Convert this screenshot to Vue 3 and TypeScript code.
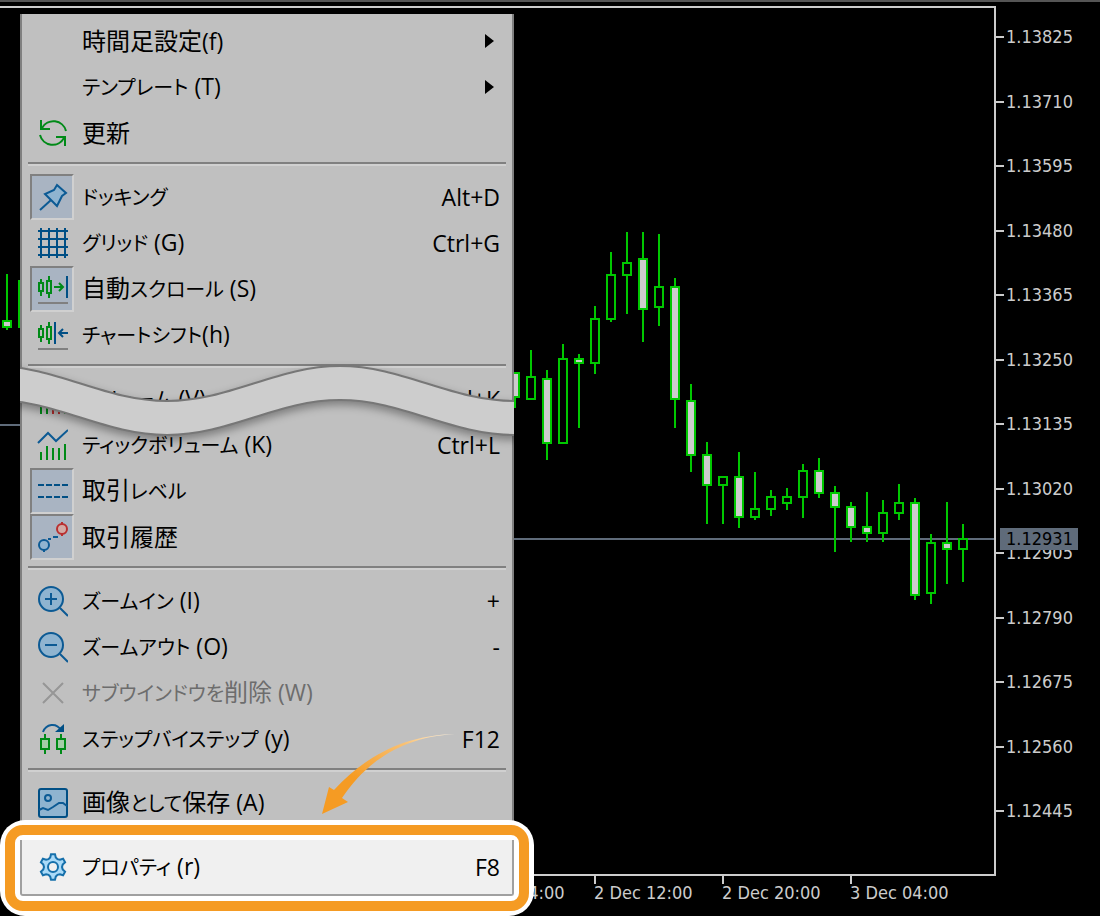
<script setup lang="ts">
interface Candle {
  x: number
  high: number
  top: number
  bottom: number
  low: number
  down: boolean
}

interface MenuEntry {
  id: string
  label: string
  shortcut?: string
  icon?: string
  checked?: boolean
  disabled?: boolean
  submenu?: boolean
}

interface Run {
  text: string
  kind: 'kana' | 'kanji' | 'latin'
}

const rows: [number, number, number, number, number, boolean][] = [
  [7, 274, 320, 328, 330, true],
  [23, 280, 280, 328, 328, false],
  [515, 372, 372, 398, 408, true],
  [531, 350, 376, 400, 400, false],
  [547, 370, 378, 444, 460, true],
  [563, 344, 358, 444, 444, false],
  [579, 354, 358, 364, 428, true],
  [595, 306, 318, 364, 374, false],
  [611, 252, 274, 320, 322, false],
  [627, 232, 262, 276, 314, false],
  [643, 232, 258, 310, 342, true],
  [659, 234, 286, 308, 326, false],
  [675, 278, 286, 400, 428, true],
  [691, 384, 400, 456, 472, true],
  [707, 442, 454, 486, 524, true],
  [723, 476, 476, 486, 524, false],
  [739, 452, 476, 518, 528, true],
  [755, 472, 508, 518, 520, false],
  [771, 490, 496, 510, 516, false],
  [787, 488, 496, 504, 510, false],
  [803, 464, 470, 498, 518, false],
  [819, 458, 470, 494, 498, true],
  [835, 486, 492, 508, 552, true],
  [851, 502, 506, 528, 542, true],
  [867, 492, 526, 534, 542, true],
  [883, 500, 512, 534, 542, false],
  [899, 484, 502, 514, 520, false],
  [915, 498, 502, 596, 600, true],
  [931, 534, 542, 594, 604, false],
  [947, 502, 542, 550, 584, true],
  [963, 524, 538, 550, 582, false],
]

const candles: Candle[] = rows.map(([x, high, top, bottom, low, down]) => ({ x, high, top, bottom, low, down }))

const prices = [
  '1.13825', '1.13710', '1.13595', '1.13480', '1.13365', '1.13250', '1.13135',
  '1.13020', '1.12905', '1.12790', '1.12675', '1.12560', '1.12445',
]

const times = ['2 Dec 04:00', '2 Dec 12:00', '2 Dec 20:00', '3 Dec 04:00']

const groups: MenuEntry[][] = [
  [
    { id: 'timeframe', label: '時間足設定(f)', submenu: true },
    { id: 'template', label: 'テンプレート (T)', submenu: true },
    { id: 'refresh', label: '更新', icon: 'refresh' },
  ],
  [
    { id: 'docking', label: 'ドッキング', shortcut: 'Alt+D', icon: 'pin', checked: true },
    { id: 'grid', label: 'グリッド (G)', shortcut: 'Ctrl+G', icon: 'grid' },
    { id: 'autoscroll', label: '自動スクロール (S)', icon: 'scroll', checked: true },
    { id: 'shift', label: 'チャートシフト(h)', icon: 'shift' },
  ],
  [
    { id: 'volume', label: 'ボリューム (V)', shortcut: 'Ctrl+K', icon: 'volume' },
    { id: 'tick', label: 'ティックボリューム (K)', shortcut: 'Ctrl+L', icon: 'tick' },
    { id: 'levels', label: '取引レベル', icon: 'levels', checked: true },
    { id: 'history', label: '取引履歴', icon: 'history', checked: true },
  ],
  [
    { id: 'zoomin', label: 'ズームイン (I)', shortcut: '+', icon: 'zoomin' },
    { id: 'zoomout', label: 'ズームアウト (O)', shortcut: '-', icon: 'zoomout' },
    { id: 'delete', label: 'サブウインドウを削除 (W)', icon: 'delete', disabled: true },
    { id: 'step', label: 'ステップバイステップ (y)', shortcut: 'F12', icon: 'step' },
  ],
  [{ id: 'save', label: '画像として保存 (A)', icon: 'save' }],
]

const splitRuns = (label: string): Run[] =>
  (label.match(/[\u3040-\u30ff]+|[\u4e00-\u9fff]+|[\x20-\x7e]+/g) ?? []).map((text) => ({
    text,
    kind: /^[\u3040-\u30ff]/.test(text) ? 'kana' : /^[\u4e00-\u9fff]/.test(text) ? 'kanji' : 'latin',
  }))

const polar = (r: number, deg: number): string => {
  const a = (deg * Math.PI) / 180
  return `${(15 + r * Math.sin(a)).toFixed(1)},${(15 - r * Math.cos(a)).toFixed(1)}`
}

const gear = [0, 60, 120, 180, 240, 300]
  .flatMap((a) => [polar(10, a - 16), polar(13, a - 9), polar(13, a + 9), polar(10, a + 16), polar(9, a + 30)])
  .join(' ')
</script>

<template>
  <main class="screen">
    <section class="chart" aria-label="Chart">
      <div class="plot">
        <svg class="canvas" aria-hidden="true">
          <g transform="translate(0 -8)">
            <rect class="level" x="0" y="424" width="20" height="2" />
            <rect class="level" x="514" y="538" width="100%" height="2" />
            <g v-for="c in candles" :key="c.x">
              <rect class="wick" :x="c.x - 1" :y="c.high" width="2" :height="c.low - c.high" />
              <rect
                class="body"
                :class="{ down: c.down }"
                :x="c.x - 4"
                :y="c.top + 1"
                width="8"
                :height="c.bottom - c.top - 2"
              />
            </g>
          </g>
        </svg>
      </div>
      <div class="price-axis">
        <span v-for="p in prices" :key="p" class="price">{{ p }}</span>
        <span class="current">1.12931</span>
      </div>
      <div class="time-axis">
        <span v-for="t in times" :key="t" class="time">{{ t }}</span>
      </div>
    </section>

    <nav class="menu" aria-label="Chart menu">
      <div class="panel">
        <div v-for="(group, gi) in groups" :key="gi" class="group">
          <button
            v-for="item in group"
            :key="item.id"
            type="button"
            class="item"
            :disabled="item.disabled"
          >
            <span class="slot" :class="{ checked: item.checked }">
              <svg v-if="item.icon" class="icon" viewBox="-2 -1 32 32" aria-hidden="true">
                <g v-if="item.icon === 'refresh'" class="green">
                  <path d="M3 2V11H12M4 10A13 13 0 0 1 28 13" />
                  <path d="M27 28V19H18M26 20A13 13 0 0 1 2 17" />
                </g>
                <g v-else-if="item.icon === 'pin'" class="blue">
                  <path class="tint" d="M19 3L28 11L24 14L19 24L13 18L7 12L16 8Z" />
                  <path d="M13 18L2 28" />
                </g>
                <path
                  v-else-if="item.icon === 'grid'"
                  class="navy"
                  d="M3 0V30M11 0V30M19 0V30M27 0V30M0 3H30M0 11H30M0 19H30M0 27H30"
                />
                <g v-else-if="item.icon === 'scroll' || item.icon === 'shift'">
                  <path class="green" d="M1 9H5V17H1ZM3 5V9M3 17V22M9 7H13V19H9ZM11 2V7M11 19V24" />
                  <template v-if="item.icon === 'scroll'">
                    <path class="green" d="M16 13H25M21 9L25 13L21 17" />
                    <path class="navy" d="M29 2V24" />
                  </template>
                  <path v-else class="navy" d="M17 2V24M30 13H21M25 9L21 13L25 17" />
                  <path class="gray" d="M0 29H30" />
                </g>
                <g v-else-if="item.icon === 'volume'">
                  <path class="green" d="M3 22V30M9 16V30" />
                  <path class="red" d="M15 18V30M21 18V30" />
                  <path class="green" d="M27 14V30" />
                </g>
                <g v-else-if="item.icon === 'tick'">
                  <path class="blue" d="M0 13L10 3L18 11L30 0" />
                  <path class="green" d="M3 22V30M9 16V30M15 18V30M21 18V30M27 14V30" />
                </g>
                <path v-else-if="item.icon === 'levels'" class="navy dashed" d="M0 9H30M0 21H30" />
                <g v-else-if="item.icon === 'history'">
                  <path class="blue" d="M10 17H13M15 15H20M6 26V30" />
                  <circle class="blue tint" cx="6" cy="23" r="5" />
                  <path class="red" d="M24 0V4M24 10V14" />
                  <circle class="red warm" cx="24" cy="7" r="5" />
                </g>
                <g v-else-if="item.icon === 'zoomin' || item.icon === 'zoomout'" class="blue">
                  <circle class="tint" cx="13" cy="13" r="12" />
                  <path d="M22 22L30 30M7 13H19" />
                  <path v-if="item.icon === 'zoomin'" d="M13 7V19" />
                </g>
                <path v-else-if="item.icon === 'delete'" class="faded" d="M5 5L25 25M25 5L5 25" />
                <g v-else-if="item.icon === 'step'">
                  <path class="blue" d="M5 8C8 0 18 -2 23 6" />
                  <path class="solid" d="M26 0V8H17Z" />
                  <path class="green mint" d="M3 15H11V25H3ZM19 15H27V25H19Z" />
                  <path class="green" d="M7 10V15M7 25V30M23 10V15M23 25V30" />
                </g>
                <g v-else-if="item.icon === 'save'" class="navy">
                  <rect class="tint" x="1" y="1" width="28" height="28" rx="2" />
                  <circle class="thin" cx="10" cy="10" r="3" />
                  <path class="thin" d="M1 22L5 20L10 22L15 19L21 15L25 15L29 18" />
                </g>
              </svg>
            </span>
            <span class="label"><span v-for="(run, ri) in splitRuns(item.label)" :key="ri" :class="run.kind">{{ run.text }}</span></span>
            <span v-if="item.shortcut" class="keys">{{ item.shortcut }}</span>
            <svg v-if="item.submenu" class="caret" viewBox="0 0 10 14" aria-hidden="true">
              <path d="M1 0L10 7L1 14Z" />
            </svg>
          </button>
        </div>
      </div>

      <div class="callout">
        <div class="highlight">
          <button type="button" class="item">
            <span class="slot">
              <svg class="icon" viewBox="-2 -1 32 32" aria-hidden="true">
                <polygon class="bright" :points="gear" />
                <circle class="bright hole" cx="15" cy="15" r="5" />
              </svg>
            </span>
            <span class="label"><span v-for="(run, ri) in splitRuns('プロパティ (r)')" :key="ri" :class="run.kind">{{ run.text }}</span></span>
            <span class="keys">F8</span>
          </button>
        </div>
      </div>

      <svg class="wave" aria-hidden="true">
        <path
          class="band"
          d="M-26 6C37 6 84 41 147 41S257 6 320 6S431 41 494 41S604 6 667 6V40C604 40 557 75 494 75S383 40 320 40S210 75 147 75S37 40 -26 40Z"
        />
      </svg>

      <svg class="pointer" viewBox="0 0 140 94" aria-hidden="true">
        <defs>
          <linearGradient id="fade" x1="0" y1="1" x2="1" y2="0">
            <stop offset="0.35" stop-color="#f59b23" />
            <stop offset="0.75" stop-color="#f9c173" />
            <stop offset="1" stop-color="#fff4e2" />
          </linearGradient>
        </defs>
        <path
          fill="url(#fade)"
          d="M135 8C85 9 45 30 14 64L9 61L2 88L28 76L22 72C46 36 82 11 135 8Z"
        />
      </svg>
    </nav>
  </main>
</template>

<style>
body {
  margin: 0;
  background: #000;
}
</style>

<style scoped>
.screen {
  position: relative;
  box-sizing: border-box;
  display: flex;
  min-height: 100vh;
  padding-top: 4px;
  border-top: 2px solid #555;
  overflow: hidden;
  background: #000;
}

.chart {
  flex: 1;
  display: grid;
  grid-template-columns: 1fr 104px;
  grid-template-rows: 1fr 40px;
  color: #ccc;
  font: 18px/22px "DejaVu Sans Condensed", "DejaVu Sans", sans-serif;
}

.plot {
  position: relative;
  border: 2px solid #ccc;
  border-left: 0;
}

.canvas {
  position: absolute;
  inset: 0;
  width: 100%;
  height: 100%;
  shape-rendering: crispEdges;
}

.level {
  fill: #5f6b7a;
}

.wick {
  fill: #00c800;
}

.body {
  fill: #000;
  stroke: #00c800;
  stroke-width: 2;
}

.body.down {
  fill: #ccc;
}

.price-axis {
  position: relative;
  display: flex;
  flex-direction: column;
  justify-content: space-between;
  padding: 20px 0 54px;
}

.price {
  display: flex;
  align-items: center;
  gap: 2px;
}

.price::before {
  content: "";
  width: 8px;
  height: 2px;
  background: #ccc;
}

.current {
  position: absolute;
  top: 522px;
  left: 4px;
  width: 72px;
  padding-left: 6px;
  background: #5f6b7a;
  color: #000;
}

.time-axis {
  grid-column: 1 / -1;
  display: flex;
  padding-left: 466px;
}

.time {
  position: relative;
  flex: 0 0 128px;
  padding-top: 6px;
  white-space: nowrap;
}

.time::before {
  content: "";
  position: absolute;
  top: 0;
  left: 0;
  width: 2px;
  height: 8px;
  background: #ccc;
}

.menu {
  position: absolute;
  top: 12px;
  left: 20px;
  width: 494px;
}

.panel {
  padding: 4px 0 14px;
  border: solid #808080;
  border-width: 0 2px;
  background: #c0c0c0;
}

.group + .group::before {
  content: "";
  display: block;
  height: 2px;
  margin: 6px 6px 8px;
  border-top: 2px solid #808080;
  background: #d0d0d0;
}

.item {
  display: flex;
  align-items: center;
  gap: 8px;
  width: 100%;
  height: 46px;
  padding: 0 12px 0 8px;
  border: 0;
  background: none;
  color: #000;
  font: 23px/32px "Open Sans", "Noto Sans CJK JP", sans-serif;
  text-align: left;
}

.item:disabled {
  color: #6d6d6d;
}

.slot {
  box-sizing: border-box;
  flex: none;
  display: flex;
  align-items: center;
  justify-content: center;
  width: 44px;
  height: 46px;
  border: 2px solid transparent;
}

.slot.checked {
  border-color: #808080 #d0d0d0 #d0d0d0 #808080;
  background: #a9b4c2;
}

.label {
  flex: 1;
  white-space: pre;
}

.kanji {
  font-size: 24px;
}

.kana {
  font-size: 20px;
  font-feature-settings: "palt";
}

.caret {
  width: 10px;
  height: 14px;
  margin-right: 6px;
}

.icon {
  width: 32px;
  height: 32px;
  fill: none;
  stroke-width: 2;
}

.green {
  stroke: #008a17;
}

.blue {
  stroke: #0c5a94;
}

.navy {
  stroke: #004f85;
}

.red {
  stroke: #b92f2f;
}

.gray {
  stroke: #808080;
}

.faded {
  stroke: #969696;
}

.tint {
  fill: #8fb4d0;
}

.warm {
  fill: #d3aaa5;
}

.mint {
  fill: #a5cda9;
}

.solid {
  fill: #004f85;
}

.thin {
  stroke: #0c5a94;
}

.dashed {
  stroke-dasharray: 6 2;
}

.bright {
  fill: #a9daf8;
  stroke: #1670ab;
}

.hole {
  fill: #f0f0f0;
}

.callout {
  position: relative;
  isolation: isolate;
}

.callout::before {
  content: "";
  position: absolute;
  z-index: -2;
  inset: -20px;
  border-radius: 25px;
  background: #fff;
}

.callout::after {
  content: "";
  position: absolute;
  z-index: -1;
  inset: -15px;
  border: 10px solid #f59b23;
  border-radius: 18px;
}

.highlight {
  padding: 4px 0;
  border: solid #a0a0a0;
  border-width: 0 2px 2px;
  border-radius: 0 0 3px 3px;
  background: #f0f0f0;
}

.wave {
  position: absolute;
  top: 346px;
  left: 0;
  width: 100%;
  height: 90px;
  pointer-events: none;
}

.band {
  fill: #cdcdcd;
  stroke: #777;
  stroke-width: 2;
  filter: drop-shadow(0 4px 4px rgba(0, 0, 0, 0.35));
}

.pointer {
  position: absolute;
  top: 712px;
  left: 300px;
  width: 140px;
  height: 94px;
  pointer-events: none;
}
</style>
